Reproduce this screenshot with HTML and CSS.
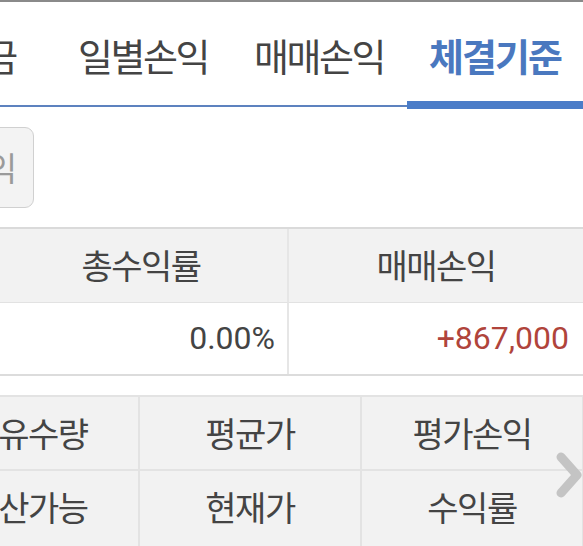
FILE: index.html
```html
<!DOCTYPE html>
<html lang="ko">
<head>
<meta charset="utf-8">
<link rel="stylesheet" href="styles.css">
</head>
<body>
<div class="page">
  <div class="tabs">
    <div class="tab">예수금</div>
    <div class="tab">일별손익</div>
    <div class="tab">매매손익</div>
    <div class="tab active">체결기준</div>
  </div>
  <div class="btn-row">
    <div class="btn">손익</div>
  </div>
  <div class="summary">
    <div class="cell head">총수익률</div>
    <div class="cell head">매매손익</div>
    <div class="cell val">0.00%</div>
    <div class="cell val red">+867,000</div>
  </div>
  <div class="grid-wrap">
    <div class="grid">
      <div class="g">보유수량</div>
      <div class="g">평균가</div>
      <div class="g">평가손익</div>
      <div class="g low">청산가능</div>
      <div class="g low">현재가</div>
      <div class="g low">수익률</div>
    </div>
    <svg class="chev" width="28" height="48" viewBox="0 0 28 48"><polyline points="6,6 22,24 6,42" fill="none" stroke="#c4c4c4" stroke-width="9" stroke-linecap="round" stroke-linejoin="round"/></svg>
  </div>
</div>
</body>
</html>
```
FILE: styles.css
```css
html, body {
  margin: 0;
  padding: 0;
  background: #fff;
}
body {
  width: 583px;
  height: 546px;
  overflow: hidden;
  font-family: "Noto Sans CJK KR", "Noto Sans", sans-serif;
  color: #444;
}
.page {
  border-top: 2px solid #8a8a8a;
}
.tabs {
  display: flex;
  align-items: flex-start;
  margin-left: -121px;
  height: 107px;
}
.tab {
  flex: 0 0 176px;
  box-sizing: border-box;
  height: 105px;
  border-bottom: 2px solid #5d82bf;
  font-size: 38px;
  letter-spacing: -2.5px;
  text-align: center;
  padding-top: 33px;
  line-height: 40px;
  color: #444;
}
.tab.active {
  height: 107px;
  border-bottom: 8px solid #4a7cc8;
  color: #4a78bf;
  font-weight: 700;
  letter-spacing: -2px;
}
.btn-row {
  height: 120px;
  padding-top: 18px;
  box-sizing: border-box;
  border-bottom: 2px solid #dadada;
}
.btn {
  margin-left: -64px;
  width: 98px;
  height: 81px;
  box-sizing: border-box;
  border: 1px solid #d0d0d0;
  border-radius: 9px;
  background: #f3f3f3;
  color: #9a9a9a;
  font-size: 33px;
  line-height: 79px;
  text-align: right;
  padding-right: 18px;
  letter-spacing: -2px;
}
.summary {
  display: grid;
  grid-template-columns: 294px 294px;
  margin-left: -5px;
  border-bottom: 2px solid #dcdcdc;
}
.cell {
  box-sizing: border-box;
  font-size: 34px;
  letter-spacing: -1.5px;
}
.cell:nth-child(odd) {
  border-right: 2px solid #e6e6e6;
}
.head {
  height: 74px;
  background: #f2f2f2;
  border-bottom: 1px solid #e2e2e2;
  text-align: center;
  line-height: 72px;
}
.val {
  height: 71px;
  text-align: right;
  padding-right: 12px;
  line-height: 71px;
  font-family: "Roboto", "Noto Sans", sans-serif;
  font-size: 32px;
  letter-spacing: 0;
  color: #444;
}
.val.red {
  color: #b0443b;
  padding-right: 14px;
}
.grid-wrap {
  position: relative;
  margin-top: 19px;
}
.grid {
  display: grid;
  grid-template-columns: 222px 222px 222px;
  margin-left: -82px;
  border-top: 2px solid #e3e3e3;
  background: #f2f2f2;
}
.g {
  box-sizing: border-box;
  height: 74px;
  border-right: 2px solid #e3e3e3;
  border-bottom: 2px solid #e3e3e3;
  text-align: center;
  font-size: 34px;
  letter-spacing: -1.5px;
  line-height: 72px;
}
.g.low {
  height: 90px;
  line-height: 72px;
}
.chev {
  position: absolute;
  left: 555px;
  top: 56px;
}
```
